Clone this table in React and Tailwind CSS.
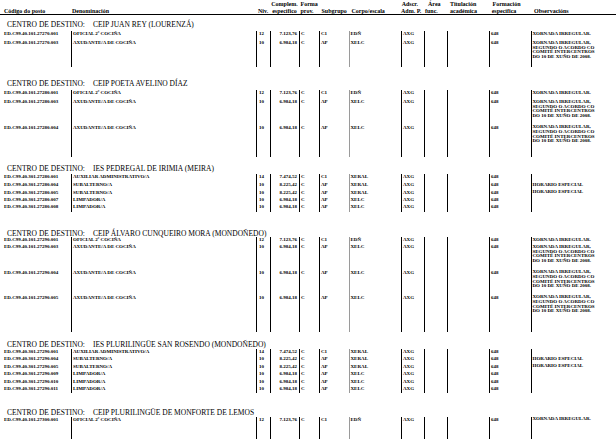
import React from 'react';

const XORNADA_LONG = ['XORNADA IRREGULAR,', 'SEGUNDO O ACORDO CO', 'COMITÉ INTERCENTROS', 'DO 10 DE XUÑO DE 2008.'];

const oficial = (code, h) => ({ code, h, denom: 'OFICIAL 2ª COCIÑA', niv: '12', comp: '7.123,76', sub: 'C1', corpo: 'EDÑ', obs: ['XORNADA IRREGULAR.'] });
const axudante = (code, h) => ({ code, h, denom: 'AXUDANTE/A DE COCIÑA', niv: '10', comp: '6.984,18', sub: 'AP', corpo: 'XELC', obs: XORNADA_LONG });
const auxiliar = (code, h) => ({ code, h, denom: 'AUXILIAR ADMINISTRATIVO/A', niv: '14', comp: '7.474,52', sub: 'C1', corpo: 'XERAL', obs: [] });
const subalterno = (code, h) => ({ code, h, denom: 'SUBALTERNO/A', niv: '10', comp: '8.225,42', sub: 'AP', corpo: 'XERAL', obs: ['HORARIO ESPECIAL'] });
const limpador = (code, h) => ({ code, h, denom: 'LIMPADOR/A', niv: '10', comp: '6.984,18', sub: 'AP', corpo: 'XELC', obs: [] });

const sections = [
  {
    name: 'CEIP JUAN REY (LOURENZÁ)',
    mt: 'mt-[5.7px]',
    gap: 'mt-[2.6px]',
    rows: [
      oficial('ED.C99.40.101.27270.001', 'h-[9px]'),
      axudante('ED.C99.40.101.27270.003', 'h-[26.7px]'),
    ],
  },
  {
    name: 'CEIP POETA AVELINO DÍAZ',
    mt: 'mt-[13px]',
    gap: 'mt-[2.3px]',
    rows: [
      oficial('ED.C99.40.101.27280.001', 'h-[9px]'),
      axudante('ED.C99.40.101.27280.003', 'h-[25.4px]'),
      axudante('ED.C99.40.101.27280.004', 'h-[32.3px]'),
    ],
  },
  {
    name: 'IES PEDREGAL DE IRIMIA (MEIRA)',
    mt: 'mt-[8px]',
    gap: 'mt-[0.7px]',
    rows: [
      auxiliar('ED.C99.40.301.27280.001', 'h-[8.3px]'),
      subalterno('ED.C99.40.301.27280.004', 'h-[7.7px]'),
      subalterno('ED.C99.40.301.27280.005', 'h-[7.3px]'),
      limpador('ED.C99.40.301.27280.007', 'h-[7.3px]'),
      limpador('ED.C99.40.301.27280.008', 'h-[7.7px]'),
    ],
  },
  {
    name: 'CEIP ÁLVARO CUNQUEIRO MORA (MONDOÑEDO)',
    mt: 'mt-[18.5px]',
    gap: '-mt-[1px]',
    rows: [
      oficial('ED.C99.40.101.27290.001', 'h-[7px]'),
      axudante('ED.C99.40.101.27290.003', 'h-[25.2px]'),
      axudante('ED.C99.40.101.27290.004', 'h-[25px]'),
      axudante('ED.C99.40.101.27290.005', 'h-[37.3px]'),
    ],
  },
  {
    name: 'IES PLURILINGÜE SAN ROSENDO (MONDOÑEDO)',
    mt: 'mt-[9px]',
    gap: '-mt-[0.3px]',
    rows: [
      auxiliar('ED.C99.40.301.27290.001', 'h-[7.3px]'),
      subalterno('ED.C99.40.301.27290.004', 'h-[7.7px]'),
      subalterno('ED.C99.40.301.27290.005', 'h-[7.6px]'),
      limpador('ED.C99.40.301.27290.009', 'h-[7.4px]'),
      limpador('ED.C99.40.301.27290.010', 'h-[7.6px]'),
      limpador('ED.C99.40.301.27290.011', 'h-[6.7px]'),
    ],
  },
  {
    name: 'CEIP PLURILINGÜE DE MONFORTE DE LEMOS',
    mt: 'mt-[15.7px]',
    gap: 'mt-[0.3px]',
    rows: [oficial('ED.C99.40.101.27300.001', 'h-[25px]')],
  },
];

const Header = () => (
  <div className="flex shrink-0 border-b border-black pt-[1px] text-[6px] font-bold leading-[6.5px] whitespace-nowrap">
    <div className="w-[71px] shrink-0 pl-[4px] pt-[6.5px]">Código do posto</div>
    <div className="w-[185px] shrink-0 pl-[1px] pt-[6.5px]">Denominación</div>
    <div className="w-[14px] shrink-0 pl-[2px] pt-[6.5px]">Niv.</div>
    <div className="w-[29px] shrink-0 text-center">
      <div>Complem.</div>
      <div>específico</div>
    </div>
    <div className="w-[20px] shrink-0 pl-[1.5px]">
      <div>Forma</div>
      <div>prov.</div>
    </div>
    <div className="w-[30px] shrink-0 pl-[2.5px] pt-[6.5px]">Subgrupo</div>
    <div className="w-[52px] shrink-0 pl-[2.5px] pt-[6.5px]">Corpo/escala</div>
    <div className="w-[23px] shrink-0">
      <div className="pl-[0.7px]">Adscr.</div>
      <div>Adm. P.</div>
    </div>
    <div className="w-[23px] shrink-0">
      <div className="pl-[4px]">Área</div>
      <div className="pl-[1px]">func.</div>
    </div>
    <div className="w-[42px] shrink-0 pl-[3px]">
      <div>Titulación</div>
      <div>académica</div>
    </div>
    <div className="w-[42px] shrink-0">
      <div className="pl-[3.5px]">Formación</div>
      <div className="pl-[2.7px]">específica</div>
    </div>
    <div className="flex-1 pl-[3px] pt-[6.5px]">Observacións</div>
  </div>
);

const Row = ({ r }) => (
  <div className={`flex shrink-0 ${r.h} text-[5px] font-bold leading-[6px] whitespace-nowrap`}>
    <div className="w-[71px] shrink-0 pl-[4px]">{r.code}</div>
    <div className="w-[185px] shrink-0 border-l border-black pl-[1px]">{r.denom}</div>
    <div className="w-[14px] shrink-0 border-l border-black pl-[2px]">{r.niv}</div>
    <div className="w-[29px] shrink-0 border-l border-black pr-[2px] text-right">{r.comp}</div>
    <div className="w-[20px] shrink-0 border-l border-black pl-[1px]">C</div>
    <div className="w-[30px] shrink-0 border-l border-black pl-[1px]">{r.sub}</div>
    <div className="w-[52px] shrink-0 border-l-[1.5px] border-[#9a9a9a] pl-[0.5px]">{r.corpo}</div>
    <div className="w-[23px] shrink-0 border-l border-black pl-[1px]">AXG</div>
    <div className="w-[23px] shrink-0 border-l border-black" />
    <div className="w-[42px] shrink-0 border-l border-black" />
    <div className="w-[42px] shrink-0 border-l border-black pl-[1px]">648</div>
    <div className="flex-1 border-l-[1.5px] border-black pl-[0.5px] pt-[0.65px] leading-[4.7px]">
      {r.obs.map((line) => (
        <div key={line}>{line}</div>
      ))}
    </div>
  </div>
);

const Section = ({ s }) => (
  <div className={`flex shrink-0 flex-col ${s.mt}`}>
    <div className="h-[8px] pl-[7px] text-[7.5px] leading-[8px] whitespace-nowrap">
      CENTRO DE DESTINO:<span className="ml-[8px]">{s.name}</span>
    </div>
    <div className={`flex flex-col ${s.gap}`}>
      {s.rows.map((r) => (
        <Row key={r.code} r={r} />
      ))}
    </div>
  </div>
);

export default function App() {
  return (
    <div className="flex h-[439px] w-[616px] flex-col overflow-hidden bg-white font-['Liberation_Serif','Times_New_Roman',serif] text-black">
      <Header />
      {sections.map((s) => (
        <Section key={s.name} s={s} />
      ))}
    </div>
  );
}
